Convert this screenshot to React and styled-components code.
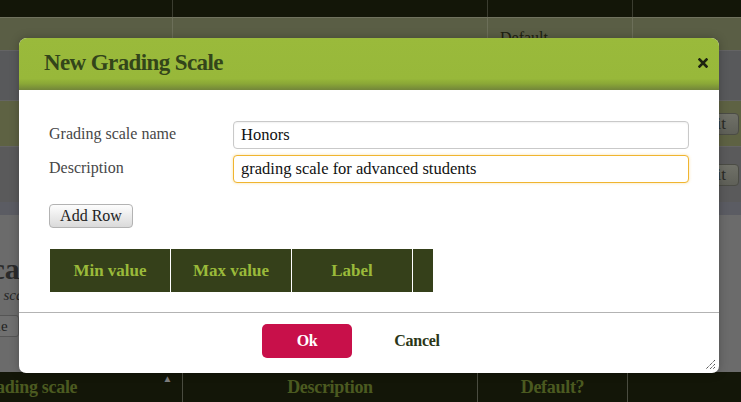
import React from "react";
import styled, { createGlobalStyle } from "styled-components";

const Global = createGlobalStyle`
  html, body { margin: 0; padding: 0; }
  body {
    width: 741px;
    height: 402px;
    overflow: hidden;
    background: #6b6b6b;
    font-family: "Liberation Serif", "Times New Roman", serif;
  }
`;

const Viewport = styled.div`
  position: relative;
  width: 741px;
  height: 402px;
  overflow: hidden;
  background: #6b6b6b;
`;

/* page behind the dialog, horizontally scrolled */
const Page = styled.div`
  margin-left: -130px;
  width: 900px;
  display: flex;
  flex-direction: column;
`;

const Grid = styled.div`
  display: grid;
  grid-template-columns: ${(p) => p.$cols};
`;

const Cell = styled.div`
  height: ${(p) => p.$h}px;
  background: ${(p) => p.$bg};
  border-right: 1px solid ${(p) => p.$line};
  border-top: ${(p) => (p.$top ? `1px solid ${p.$top}` : "none")};
  box-sizing: border-box;
  display: flex;
  align-items: ${(p) => p.$align || "flex-start"};
  justify-content: ${(p) => p.$justify || "flex-start"};
`;

const CellText = styled.span`
  font-size: 16px;
  color: #1d2010;
  padding: 11px 0 0 12px;
`;

const RowButton = styled.span`
  margin-right: 30px;
  height: 22px;
  box-sizing: border-box;
  padding: 0 12px 0 9px;
  border: 1px solid #4b4c45;
  border-radius: 4px;
  background: linear-gradient(#707168, #5f6058);
  font-size: 17px;
  line-height: 20px;
  color: #2a2a26;
`;

const Band = styled.div`
  height: 13px;
  background: #5b5c63;
`;

const Section = styled.div`
  height: 157px;
  box-sizing: border-box;
  padding: 36px 0 0 0;
`;

const Heading = styled.h1`
  margin: 0 0 0 -6px;
  font-size: 30px;
  line-height: 36px;
  font-weight: bold;
  color: #2b2b2b;
`;

const Intro = styled.p`
  margin: 0 0 0 -2px;
  font-size: 15px;
  line-height: 16px;
  font-style: italic;
  color: #262626;
`;

const PageButton = styled.span`
  display: inline-block;
  margin: 12px 0 0 15px;
  height: 22px;
  box-sizing: border-box;
  padding: 0 10px;
  border: 1px solid #555;
  border-radius: 3px;
  background: #707070;
  font-size: 15px;
  line-height: 20px;
  color: #222;
`;

const HeadCell = styled.div`
  position: relative;
  height: 30px;
  background: #131608;
  border-right: 1px solid #4a4c40;
  text-align: center;
  font-size: 18px;
  font-weight: bold;
  line-height: 30px;
  color: #4b5a20;
  letter-spacing: -0.3px;
`;

const SortMark = styled.span`
  position: absolute;
  top: 2px;
  right: 10px;
  font-size: 10px;
  line-height: 10px;
  color: #7c7c7c;
`;

/* dialog */
const Dialog = styled.div`
  position: absolute;
  left: 19px;
  top: 38px;
  width: 700px;
  height: 335px;
  display: flex;
  flex-direction: column;
  background: #fff;
  border-radius: 8px 8px 7px 7px;
  box-shadow: 0 0 10px rgba(0, 0, 0, 0.25);
`;

const DialogHeader = styled.div`
  height: 52px;
  flex: none;
  box-sizing: border-box;
  padding: 0 11px 0 25px;
  display: flex;
  align-items: center;
  justify-content: space-between;
  border-radius: 8px 8px 0 0;
  background: linear-gradient(
    #9aba3b 0%,
    #98b83a 78%,
    #8aa737 88%,
    #72853a 100%
  );
`;

const Title = styled.h2`
  margin: 0 0 2px;
  font-size: 23px;
  font-weight: bold;
  letter-spacing: -0.6px;
  color: #33451a;
`;

const Close = styled.span`
  display: flex;
  margin-bottom: 2px;
`;

const Body = styled.div`
  padding: 31px 30px 20px 30px;
`;

const Form = styled.div`
  display: grid;
  grid-template-columns: 184px 1fr;
  row-gap: 6px;
`;

const Label = styled.label`
  font-size: 16px;
  line-height: 20px;
  padding-top: 3px;
  color: #474747;
`;

const Input = styled.input`
  height: 28px;
  width: 100%;
  box-sizing: border-box;
  padding: 0 7px;
  border: 1px solid ${(p) => (p.$focus ? "#f0b530" : "#c9c9c9")};
  border-radius: 4px;
  box-shadow: ${(p) =>
    p.$focus
      ? "0 0 3px rgba(240, 181, 48, 0.45)"
      : "inset 0 1px 2px rgba(0, 0, 0, 0.06)"};
  font-family: "Liberation Serif", "Times New Roman", serif;
  font-size: 16.5px;
  color: #111;
  outline: none;
  background: #fff;
`;

const AddButton = styled.button`
  margin-top: 21px;
  width: 84px;
  height: 24px;
  padding: 0;
  border: 1px solid #b3b3b3;
  border-radius: 4px;
  background: linear-gradient(#fdfdfd, #dadada);
  font-family: "Liberation Serif", "Times New Roman", serif;
  font-size: 16px;
  color: #222;
`;

const ScaleTable = styled.div`
  margin: 21px 0 0 1px;
  width: 383px;
  display: grid;
  grid-template-columns: 120px 120px 120px 20px;
  column-gap: 1px;
  background: #fff;
`;

const ScaleHead = styled.div`
  height: 43px;
  background: #35401a;
  display: flex;
  align-items: center;
  justify-content: center;
  font-size: 17px;
  font-weight: bold;
  color: #9aba3a;
`;

const Footer = styled.div`
  flex: 1;
  position: relative;
  border-top: 1px solid #b3b3b3;
  display: flex;
  justify-content: center;
  align-items: flex-start;
  gap: 20px;
  padding: 11px 14px 0 0;
`;

const FooterButton = styled.button`
  width: 90px;
  height: 34px;
  padding: 0;
  border: none;
  border-radius: 5px;
  background: ${(p) => (p.$primary ? "#c8104a" : "transparent")};
  color: ${(p) => (p.$primary ? "#fff" : "#2b3617")};
  font-family: "Liberation Serif", "Times New Roman", serif;
  font-size: 16px;
  font-weight: bold;
  letter-spacing: -0.3px;
`;

const Grip = styled.svg`
  position: absolute;
  right: 3px;
  bottom: 3px;
`;

export default function App() {
  const topCols = "303px 315px 145px 137px";
  const rows = [
    { h: 33, bg: "#5a5e45", line: "#6c6f59", top: "#70725e", text: "Default" },
    { h: 50, bg: "#58595b", line: "#636363", top: "#646464" },
    { h: 46, bg: "#5e6243", line: "#6c6f58", top: "#646464", btn: true },
    { h: 56, bg: "#5a5a5b", line: "#636363", top: "#646464", btn: true },
  ];
  return (
    <Viewport>
      <Global />
      <Page>
        <Grid $cols={topCols}>
          {[0, 1, 2, 3].map((i) => (
            <Cell key={"h" + i} $h={17} $bg="#131608" $line="#3b3d30" />
          ))}
          {rows.map((r, ri) =>
            [0, 1, 2, 3].map((i) => (
              <Cell
                key={ri + "-" + i}
                $h={r.h}
                $bg={r.bg}
                $line={r.line}
                $top={r.top}
                $align={i === 3 && r.btn ? "center" : "flex-start"}
                $justify={i === 3 && r.btn ? "flex-end" : "flex-start"}
              >
                {i === 2 && r.text && <CellText>{r.text}</CellText>}
                {i === 3 && r.btn && <RowButton>Edit</RowButton>}
              </Cell>
            ))
          )}
        </Grid>
        <Band />
        <Section>
          <Heading>Grading scales</Heading>
          <Intro>Manage your grading scales here.</Intro>
          <PageButton>New grading scale</PageButton>
        </Section>
        <Grid $cols="313px 295px 150px 142px">
          <HeadCell>
            Grading scale
            <SortMark>▲</SortMark>
          </HeadCell>
          <HeadCell>Description</HeadCell>
          <HeadCell>Default?</HeadCell>
          <HeadCell />
        </Grid>
      </Page>

      <Dialog role="dialog">
        <DialogHeader>
          <Title>New Grading Scale</Title>
          <Close>
            <svg width="10" height="10" viewBox="0 0 10 10">
              <path
                d="M1.5 1.5 L8.5 8.5 M8.5 1.5 L1.5 8.5"
                stroke="#1e2410"
                strokeWidth="2.6"
                strokeLinecap="square"
              />
            </svg>
          </Close>
        </DialogHeader>
        <Body>
          <Form>
            <Label>Grading scale name</Label>
            <Input defaultValue="Honors" />
            <Label>Description</Label>
            <Input $focus defaultValue="grading scale for advanced students" />
          </Form>
          <AddButton>Add Row</AddButton>
          <ScaleTable>
            <ScaleHead>Min value</ScaleHead>
            <ScaleHead>Max value</ScaleHead>
            <ScaleHead>Label</ScaleHead>
            <ScaleHead />
          </ScaleTable>
        </Body>
        <Footer>
          <FooterButton $primary>Ok</FooterButton>
          <FooterButton>Cancel</FooterButton>
          <Grip width="11" height="11" viewBox="0 0 11 11">
            <path
              d="M10 1 L1 10 M10 5 L5 10 M10 8 L8 10"
              stroke="#333"
              strokeWidth="1"
              strokeDasharray="1.2 0.8"
            />
          </Grip>
        </Footer>
      </Dialog>
    </Viewport>
  );
}
